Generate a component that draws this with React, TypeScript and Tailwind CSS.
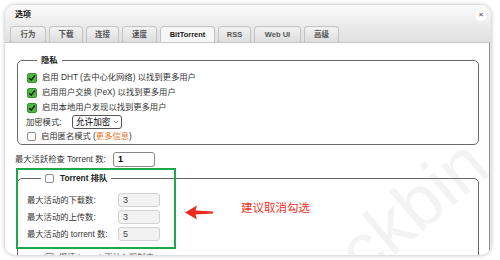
import React from 'react'
import { ChevronDown } from 'lucide-react'

const tabs = [
  { label: '行为', w: 'w-[36px]' },
  { label: '下载', w: 'w-[34px]' },
  { label: '连接', w: 'w-[33px]' },
  { label: '速度', w: 'w-[35px]' },
  { label: 'BitTorrent', w: 'w-[55px]', active: true },
  { label: 'RSS', w: 'w-[33px]' },
  { label: 'Web UI', w: 'w-[47px]' },
  { label: '高级', w: 'w-[35px]' },
]

const CheckBox = ({ checked }: { checked?: boolean }) =>
  checked ? (
    <span className="w-[10px] h-[10px] shrink-0 rounded-[2px] bg-[#4fb644] border border-[#3a8f30] flex items-center justify-center">
      <svg viewBox="0 0 10 10" className="w-[8px] h-[8px]">
        <path d="M1.5 5.2 L4 7.6 L8.6 1.8" fill="none" stroke="#15250f" strokeWidth="1.8" />
      </svg>
    </span>
  ) : (
    <span className="w-[9px] h-[9px] shrink-0 rounded-[2px] bg-white border border-[#8c8c8c]" />
  )

const queueRows = [
  { label: '最大活动的下载数:', value: '3' },
  { label: '最大活动的上传数:', value: '3' },
  { label: '最大活动的 torrent 数:', value: '5' },
]

export default function App() {
  return (
    <div className="w-[500px] h-[260px] bg-white pt-[5px] pl-[5px] overflow-hidden font-['Liberation_Sans','Noto_Sans_CJK_SC',sans-serif] text-[#333]">
      <div className="relative w-[486px] h-[250px] rounded-[10px] overflow-hidden bg-white shadow-[0_0_4px_rgba(0,0,0,0.3)] flex flex-col">
        {/* watermark, under everything */}
        <span className="absolute left-[366px] top-[212px] text-[72px] leading-none font-['Liberation_Sans',sans-serif] text-[#f3f3f3] -rotate-[40deg] origin-bottom-left pointer-events-none select-none">
          ckbin
        </span>

        {/* title */}
        <div className="relative h-[19px] shrink-0 flex items-center justify-between pl-[10px] pr-[4px] bg-gradient-to-b from-[#fbfbfb] to-[#ededed]">
          <span className="text-[8px] font-bold text-[#111] leading-none">选项</span>
          <span className="w-[12px] h-[12px] rounded-full bg-white flex items-center justify-center text-[8px] leading-none text-[#666] font-bold">×</span>
        </div>

        {/* tabs */}
        <div className="relative h-[19px] shrink-0 flex items-end gap-[3px] pl-[5px] bg-gradient-to-b from-[#ececec] to-[#e0e0e0] border-b border-[#c6c6c6]">
          {tabs.map(t => (
            <div
              key={t.label}
              className={`${t.w} h-[16px] rounded-t-[4px] border border-b-0 border-[#c2c2c2] flex items-center justify-center text-[7.5px] font-bold leading-none ${t.active ? 'bg-[#f7f7f7] text-[#1a1a1a]' : 'bg-gradient-to-b from-[#f3f3f3] to-[#dddddd] text-[#555]'}`}
            >
              {t.label}
            </div>
          ))}
        </div>

        {/* body */}
        <div className="relative flex-1 flex min-h-0">
          <div className="w-[484px] pl-[10px] pr-[10px] text-[8.3px] leading-none">
            <fieldset className="ml-[2px] mt-[12px] border border-[#6a6a6a] rounded-[5px] pl-[9px] pt-[5px] pb-[1px]">
              <legend className="ml-[10px] px-[4px] h-[10px] leading-[10px] text-[8.3px] font-bold text-[#222]">隐私</legend>
              <div className="h-[15px] flex items-center gap-[5px]">
                <CheckBox checked />
                <span>启用 DHT (去中心化网络) 以找到更多用户</span>
              </div>
              <div className="h-[15px] flex items-center gap-[5px]">
                <CheckBox checked />
                <span>启用用户交换 (PeX) 以找到更多用户</span>
              </div>
              <div className="h-[15px] flex items-center gap-[5px]">
                <CheckBox checked />
                <span>启用本地用户发现以找到更多用户</span>
              </div>
              <div className="h-[14px] flex items-center -ml-[1px]">
                <span className="w-[46px]">加密模式:</span>
                <span className="h-[14px] w-[50px] border border-[#555] rounded-[3px] flex items-center gap-[2px] pl-[3px] text-[8.6px] text-black whitespace-nowrap">
                  允许加密
                  <ChevronDown size={8} strokeWidth={1.6} color="#222" className="shrink-0" />
                </span>
              </div>
              <div className="h-[14px] flex items-center gap-[5px]">
                <CheckBox />
                <span>
                  启用匿名模式 (<span className="text-[#e8731a]">更多信息</span>)
                </span>
              </div>
            </fieldset>

            <div className="mt-[7px] h-[15px] flex items-center">
              <span className="w-[98px]">最大活跃检查 Torrent 数:</span>
              <span className="w-[42px] h-[15px] bg-white border border-[#8a8a8a] rounded-[3px] flex items-center pl-[4px] text-[9px] text-black font-semibold">1</span>
            </div>

            <fieldset className="ml-[2px] mt-[5px] border border-[#6a6a6a] rounded-[5px] pl-[9px] pt-[9px] pb-[6px]">
              <legend className="ml-[14px] px-[4px] h-[12px] flex items-center gap-[6px]">
                <CheckBox />
                <span className="font-bold text-[#222]">Torrent 排队</span>
              </legend>
              <div className="flex flex-col gap-[3px]">
                {queueRows.map(r => (
                  <div key={r.label} className="h-[14px] flex items-center">
                    <span className="w-[91px]">{r.label}</span>
                    <span className="w-[42px] h-[14px] bg-[#f2f2f2] border border-[#d2d2d2] rounded-[3px] flex items-center pl-[4px] text-[9px] text-[#444]">
                      {r.value}
                    </span>
                  </div>
                ))}
              </div>
              <div className="mt-[10px] h-[12px] flex items-center gap-[5px] pl-[18px] text-[#555]">
                <CheckBox />
                <span>慢速 torrent 不计入限制内</span>
              </div>
            </fieldset>
          </div>
          <div className="w-px bg-[#8a8a8a]" />
          <div className="flex-1 bg-[#ececec]" />
        </div>

        {/* annotations */}
        <div className="absolute left-[11px] top-[163px] w-[160px] h-[81px] border-2 border-[#1da84a]" />
        <svg viewBox="0 0 28 15" className="absolute left-[180px] top-[200px] w-[28px] h-[15px]">
          <path d="M0 7.5 L12 0.5 L10.5 5.6 L28 6.6 L28 8.4 L10.5 9.4 L12 14.5 Z" fill="#ea2a1f" />
        </svg>
        <span className="absolute left-[236px] top-[195px] text-[11.5px] leading-[14px] text-[#f0321e] font-['Noto_Sans_CJK_SC',sans-serif]">
          建议取消勾选
        </span>
      </div>
    </div>
  )
}
